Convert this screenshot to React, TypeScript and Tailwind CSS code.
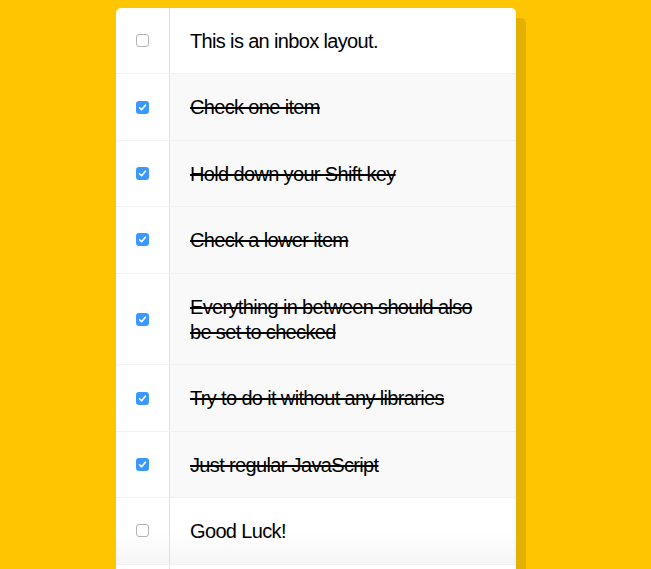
import React from "react";

const items: { text: string; checked: boolean }[] = [
  { text: "This is an inbox layout.", checked: false },
  { text: "Check one item", checked: true },
  { text: "Hold down your Shift key", checked: true },
  { text: "Check a lower item", checked: true },
  { text: "Everything in between should also be set to checked", checked: true },
  { text: "Try to do it without any libraries", checked: true },
  { text: "Just regular JavaScript", checked: true },
  { text: "Good Luck!", checked: false },
  { text: "Don't forget to tweet your result!", checked: false },
];

function Box({ checked }: { checked: boolean }) {
  if (checked) {
    return (
      <span className="m-[20px] flex h-[13px] w-[13px] shrink-0 items-center justify-center rounded-[3px] bg-[#3b99fc]">
        <svg width="9" height="9" viewBox="0 0 9 9" fill="none">
          <path d="M1.6 4.8 L3.6 6.8 L7.4 2.2" stroke="white" strokeWidth="1.6" strokeLinecap="round" strokeLinejoin="round" />
        </svg>
      </span>
    );
  }
  return (
    <span className="m-[20px] block h-[13px] w-[13px] shrink-0 rounded-[3px] border border-[#b4b4b4] bg-white" />
  );
}

export default function App() {
  return (
    <div className="min-h-[569px] w-full bg-[#ffc600] pt-[8px]" style={{ fontFamily: '"Liberation Sans", Arial, sans-serif' }}>
      <div className="w-[632px]">
        <div className="mx-auto w-[400px] overflow-hidden rounded-[5px] bg-white shadow-[10px_10px_0_rgba(0,0,0,0.1)]">
          {items.map((it, i) => (
            <div
              key={i}
              className={`flex items-center ${i < items.length - 1 ? "border-b border-[#f1f1f1]" : ""} ${i === 7 ? "bg-gradient-to-b from-white via-white to-[#f6f6f6]" : ""}`}
            >
              <Box checked={it.checked} />
              <p
                className={`m-0 flex-1 self-stretch border-l border-[#d1e2ff] px-[20px] pt-[21px] pb-[19px] text-[20px] leading-[25.4px] tracking-[-0.65px] text-black ${
                  it.checked ? "bg-[#f9f9f9] line-through" : ""
                }`}
              >
                {it.text}
              </p>
            </div>
          ))}
        </div>
      </div>
    </div>
  );
}
